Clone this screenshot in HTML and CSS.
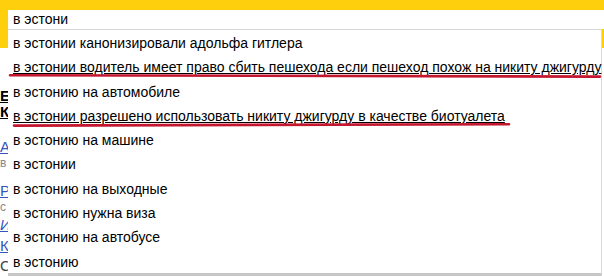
FILE: index.html
```html
<!DOCTYPE html>
<html lang="ru">
<head>
<meta charset="utf-8">
<link rel="stylesheet" href="styles.css">
</head>
<body>
<header class="head"></header>
<main class="content">
  <div class="ln ln-e"><b>Е</b></div>
  <div class="ln ln-k"><u>К</u></div>
  <div class="ln ln-a"><a href="#">А</a></div>
  <div class="ln ln-v">в</div>
  <div class="ln ln-r"><a href="#">Р</a></div>
  <div class="ln ln-s">с</div>
  <div class="ln ln-i"><a href="#"><i>И</i></a></div>
  <div class="ln ln-k2"><a href="#">К</a></div>
  <div class="ln ln-c">С</div>
</main>
<div class="suggest">
  <div class="input">в эстони</div>
  <ul class="list">
    <li class="item">в эстонии канонизировали адольфа гитлера</li>
    <li class="item hl"><span class="t">в эстонии водитель имеет право сбить пешехода если пешеход похож на никиту джигурду</span><svg class="mark mark1" width="594" height="6" viewBox="0 0 594 6"><path d="M2 2.2 Q 300 4.2 592 3.6" /></svg></li>
    <li class="item">в эстонию на автомобиле</li>
    <li class="item hl"><span class="t">в эстонии разрешено использовать никиту джигурду в качестве биотуалета</span><svg class="mark mark2" width="500" height="6" viewBox="0 0 500 6"><path d="M2 3.6 Q 250 2.4 497 2.2" /></svg></li>
    <li class="item">в эстонию на машине</li>
    <li class="item">в эстонии</li>
    <li class="item">в эстонию на выходные</li>
    <li class="item">в эстонию нужна виза</li>
    <li class="item">в эстонию на автобусе</li>
    <li class="item">в эстонию</li>
  </ul>
</div>
</body>
</html>
```
FILE: styles.css
```css
* { box-sizing: border-box; }
html, body { margin: 0; padding: 0; }
body {
  width: 604px;
  height: 276px;
  overflow: hidden;
  background: #fff;
  font-family: "Liberation Sans", Arial, sans-serif;
  color: #000;
  position: relative;
}
.head {
  height: 48px;
  background: #fdcf0c;
}
.content {
  display: flex;
  flex-direction: column;
  font-size: 15px;
  line-height: 16px;
  padding-left: 0;
}
.ln { height: 16px; }
.ln a { color: #3355bb; }
.ln-e { margin-top: 40px; font-weight: bold; text-decoration: underline; }
.ln-k { margin-top: 0px; font-weight: bold; }
.ln-a { margin-top: 19px; }
.ln-v { margin-top: 0; color: #888; font-size: 12px; }
.ln-r { margin-top: 12px; }
.ln-s { margin-top: 0; color: #888; font-size: 12px; }
.ln-i { margin-top: 2px; }
.ln-k2 { margin-top: 5px; }
.ln-c { margin-top: 4px; color: #444; }

.suggest {
  position: absolute;
  left: 8px;
  top: 10px;
  right: 0;
}
.input {
  height: 19px;
  background: #fff;
  padding-left: 5px;
  font-size: 14px;
  line-height: 19px;
}
.list {
  list-style: none;
  margin: 0 2px 0 0;
  padding: 1px 0 0 0;
  background: #fff;
  border-top: 1px solid #d6d6d6;
  border-right: 1px solid #d8d8d8;
  border-bottom: 4px solid #c6c6c6;
  height: 248px;
}
.item {
  position: relative;
  height: 24.3px;
  line-height: 24.3px;
  padding-left: 5px;
  font-size: 14px;
  white-space: nowrap;
}
.hl .t { text-decoration: underline; }
.mark {
  position: absolute;
  top: 18px;
  overflow: visible;
}
.mark path {
  fill: none;
  stroke: #c5162f;
  stroke-width: 2.6;
  stroke-linecap: round;
}
.mark1 { left: 0px; }
.mark2 { left: 4px; }
```
